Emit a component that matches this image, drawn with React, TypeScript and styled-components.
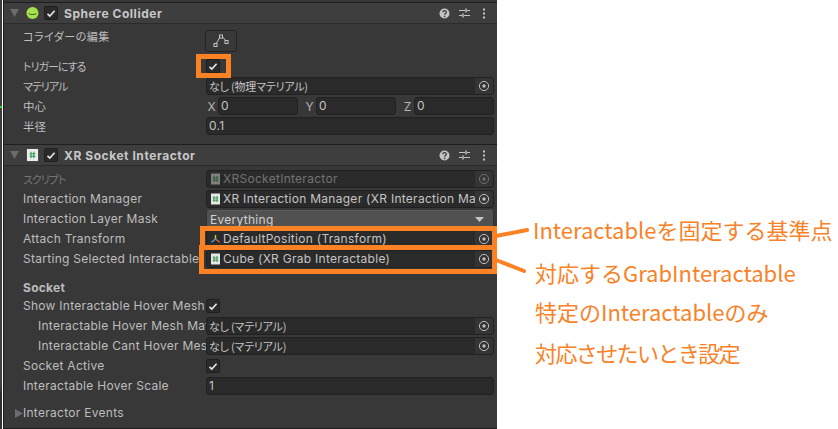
import React from "react";
import styled, { createGlobalStyle } from "styled-components";

const Global = createGlobalStyle`
  html, body { margin: 0; padding: 0; background: #fff; }
  body { font-family: Inter, "Noto Sans CJK JP", sans-serif; }
`;

const Page = styled.div`
  position: relative;
  display: flex;
  width: 838px;
  height: 429px;
  overflow: hidden;
  background: #fff;
`;

const SceneStrip = styled.div`
  position: relative;
  width: 2px;
  height: 429px;
  flex: none;
  background: linear-gradient(#3f3c38 0, #45423d 385px, #2c2c2c 395px, #333 429px);
`;

const GreenTick = styled.i`
  position: absolute;
  left: 0;
  top: 106px;
  width: 2px;
  height: 2px;
  background: #2fe02f;
`;

const Inspector = styled.div`
  width: 494px;
  height: 429px;
  flex: none;
  margin-left: 1px;
  background: #383838;
  border-left: 1px solid #1f1f1f;
  border-bottom: 1px solid #1f1f1f;
  box-sizing: border-box;
  overflow: hidden;
`;

const ComponentHeader = styled.div<{ $mt: number }>`
  display: flex;
  align-items: center;
  height: 20px;
  margin-top: ${(p) => p.$mt}px;
  padding: 0 8px 0 6px;
  background: #3e3e3e;
  border-top: 1px solid #1e1e1e;
  border-bottom: 1px solid #2b2b2b;
`;

const Fold = styled.svg`
  width: 9px;
  height: 8px;
  flex: none;
  margin-right: 7px;
`;

const HeaderIcon = styled.svg`
  width: 13px;
  height: 14px;
  flex: none;
  margin-right: 5px;
`;

const Toggle = styled.span`
  display: inline-flex;
  align-items: center;
  justify-content: center;
  width: 14px;
  height: 14px;
  flex: none;
  border-radius: 2px;
  border: 1px solid #1f1f1f;
  background: #2a2a2a;
  box-sizing: border-box;
`;

const Tick = () => (
  <svg width="10" height="9" viewBox="0 0 10 9">
    <path d="M1.5 4.8 L3.8 7 L8.6 1.8" fill="none" stroke="#e8e8e8" strokeWidth="1.6" />
  </svg>
);

const HeaderTitle = styled.span`
  margin-left: 6px;
  flex: 1;
  font-size: 12px;
  font-weight: 700;
  letter-spacing: 0.55px;
  color: #c8c8c8;
`;

const HeaderTools = styled.div`
  display: flex;
  align-items: center;
  gap: 9px;
`;

const Rows = styled.div<{ $pt?: number }>`
  padding: ${(p) => p.$pt ?? 0}px 3px 0 19px;
`;

const Row = styled.div<{ $h?: number; $dim?: boolean; $end?: boolean }>`
  position: relative;
  display: flex;
  align-items: ${(p) => (p.$end ? "flex-end" : "center")};
  height: ${(p) => p.$h ?? 20}px;
  color: ${(p) => (p.$dim ? "#767676" : "#bdbdbd")};
`;

const Label = styled.div<{ $indent?: boolean; $bold?: boolean }>`
  width: 183px;
  flex: none;
  box-sizing: border-box;
  padding-left: ${(p) => (p.$indent ? 15 : 0)}px;
  padding-right: 3px;
  font-size: 12px;
  letter-spacing: 0.28px;
  font-weight: ${(p) => (p.$bold ? 700 : 400)};
  white-space: nowrap;
  overflow: hidden;
  line-height: 16px;
`;

const JpLabel = styled(Label)<{ $top?: boolean; $size?: number; $ls?: number }>`
  font-size: ${(p) => p.$size ?? 11}px;
  letter-spacing: ${(p) => p.$ls ?? -1}px;
  font-family: "Noto Sans CJK JP", sans-serif;
  font-feature-settings: "palt";
  ${(p) => (p.$top ? "align-self: flex-start; margin-top: 4px;" : "")}
`;

const Value = styled.div`
  flex: 1;
  min-width: 0;
  display: flex;
  align-items: center;
`;

const Field = styled.div<{ $dim?: boolean }>`
  flex: 1;
  min-width: 0;
  height: 18px;
  display: flex;
  align-items: center;
  background: #2a2a2a;
  border: 1px solid #212121;
  border-radius: 3px;
  box-sizing: border-box;
  overflow: hidden;
  color: ${(p) => (p.$dim ? "#737373" : "#c4c4c4")};
`;

const FieldText = styled.span<{ $jp?: boolean }>`
  flex: 1;
  min-width: 0;
  padding-left: 2px;
  font-size: ${(p) => (p.$jp ? 11 : 12)}px;
  letter-spacing: ${(p) => (p.$jp ? -0.2 : 0.28)}px;
  font-family: ${(p) => (p.$jp ? '"Noto Sans CJK JP", sans-serif' : "Inter, sans-serif")};
  font-feature-settings: ${(p) => (p.$jp ? '"palt"' : "normal")};
  white-space: nowrap;
  overflow: hidden;
  line-height: 16px;
`;

const Picker = styled.span`
  width: 18px;
  height: 100%;
  flex: none;
  display: flex;
  align-items: center;
  justify-content: center;
  background: #343434;
`;

const PickIcon = ({ dim }: { dim?: boolean }) => (
  <svg width="12" height="12" viewBox="0 0 12 12">
    <circle cx="6" cy="6" r="4.6" fill="none" stroke={dim ? "#6e6e6e" : "#bdbdbd"} strokeWidth="1" />
    <circle cx="6" cy="6" r="1.7" fill={dim ? "#6e6e6e" : "#bdbdbd"} />
  </svg>
);

const FieldIcon = styled.svg<{ $dim?: boolean }>`
  flex: none;
  margin-left: 3px;
  opacity: ${(p) => (p.$dim ? 0.45 : 1)};
`;

const ScriptIcon = ({ dim }: { dim?: boolean }) => (
  <FieldIcon $dim={dim} width="11" height="12" viewBox="0 0 11 12">
    <rect x="1" y="0.5" width="9" height="11" fill="#e6e6e6" />
    <path d="M4 3v6M7 3v6M2.8 5h5.4M2.8 7.2h5.4" stroke="#3f9a56" strokeWidth="1.1" />
  </FieldIcon>
);

const TransformIcon = () => (
  <FieldIcon width="11" height="12" viewBox="0 0 12 12">
    <path d="M6 1.5V6" stroke="#a8d24f" strokeWidth="1.6" />
    <path d="M6 6 L10.5 9.5" stroke="#e0623f" strokeWidth="1.6" />
    <path d="M6 6 L1.5 9.5" stroke="#4a9fd8" strokeWidth="1.6" />
  </FieldIcon>
);

const EditButton = styled.div`
  width: 32px;
  height: 22px;
  margin: 2px 0 0 -1px;
  display: flex;
  align-items: center;
  justify-content: center;
  background: #383838;
  border: 1px solid #242424;
  border-radius: 3px;
  box-sizing: border-box;
`;

const Dropdown = styled.div`
  flex: 1;
  height: 18px;
  display: flex;
  align-items: center;
  justify-content: space-between;
  padding: 0 9px 0 3px;
  background: #515151;
  border: 1px solid #303030;
  border-top-color: #5c5c5c;
  border-radius: 3px;
  box-sizing: border-box;
  font-size: 12px;
  letter-spacing: 0.28px;
  color: #d2d2d2;
`;

const Vec = styled.div`
  flex: 1;
  display: flex;
  align-items: center;
  gap: 6px;
`;

const Axis = styled.span`
  font-size: 12px;
  color: #b4b4b4;
  width: 9px;
  margin-left: 1px;
  text-align: center;
`;

const VecItem = styled.div`
  flex: 1;
  display: flex;
  align-items: center;
  gap: 2px;
  min-width: 0;
`;

const SideFold = styled.svg`
  position: absolute;
  left: -8px;
  top: 13px;
  width: 8px;
  height: 9px;
`;

const Notes = styled.aside`
  flex: 1;
  display: flex;
  flex-direction: column;
  padding: 212px 0 0 36px;
  font-family: "Noto Sans CJK JP", sans-serif;
  font-size: 22px;
  color: #f98228;
  white-space: nowrap;
`;

const Note = styled.div<{ $h: number; $ml?: number; $ls?: number }>`
  height: ${(p) => p.$h}px;
  line-height: 34px;
  margin-left: ${(p) => p.$ml ?? 0}px;
  letter-spacing: ${(p) => p.$ls ?? 0}px;
`;

const Mark = styled.div<{ $x: number; $y: number; $w: number; $h: number }>`
  position: absolute;
  left: ${(p) => p.$x}px;
  top: ${(p) => p.$y}px;
  width: ${(p) => p.$w}px;
  height: ${(p) => p.$h}px;
  border: 5px solid #fb8125;
  box-sizing: border-box;
  pointer-events: none;
`;

const Callouts = styled.svg`
  position: absolute;
  left: 0;
  top: 0;
  pointer-events: none;
`;

const Check = () => (
  <Toggle>
    <Tick />
  </Toggle>
);

const Target = ({ text, jp, dim, icon }: { text: string; jp?: boolean; dim?: boolean; icon?: React.ReactNode }) => (
  <Value>
    <Field $dim={dim}>
      {icon}
      <FieldText $jp={jp}>{text}</FieldText>
      <Picker>
        <PickIcon dim={dim} />
      </Picker>
    </Field>
  </Value>
);

const Tools = () => (
  <HeaderTools>
    <svg width="11" height="11" viewBox="0 0 11 11">
      <circle cx="5.5" cy="5.5" r="5" fill="#c4c4c4" />
      <path d="M3.8 4.2c0-2.2 3.5-2.2 3.5 0 0 1.4-1.7 1.2-1.7 2.6" fill="none" stroke="#3e3e3e" strokeWidth="1.3" />
      <rect x="4.9" y="7.7" width="1.4" height="1.4" fill="#3e3e3e" />
    </svg>
    <svg width="11" height="10" viewBox="0 0 11 10">
      <path d="M0 2.5h6M8 2.5h3M0 7.5h3M5 7.5h6" stroke="#c4c4c4" strokeWidth="1.2" />
      <path d="M7 0.5v4M4 5.5v4" stroke="#c4c4c4" strokeWidth="1.4" />
    </svg>
    <svg width="10" height="11" viewBox="0 0 10 11">
      <path d="M5 0.5v2M5 4.5v2M5 8.5v2" stroke="#c4c4c4" strokeWidth="2" />
    </svg>
  </HeaderTools>
);

const FoldDown = () => (
  <Fold viewBox="0 0 9 8">
    <path d="M0 0H9L4.5 8Z" fill="#6c6c6c" />
  </Fold>
);

export default function App() {
  return (
    <Page>
      <Global />
      <SceneStrip>
        <GreenTick />
      </SceneStrip>
      <Inspector>
        <ComponentHeader $mt={2}>
          <FoldDown />
          <HeaderIcon viewBox="0 0 14 14">
            <circle cx="7" cy="7" r="6.5" fill="#a4e24c" />
            <path d="M3 7c1.8 1.6 6.2 1.6 8 0v1.2c-1.8 1.4-6.2 1.4-8 0Z" fill="#4a5f2c" />
          </HeaderIcon>
          <Check />
          <HeaderTitle>Sphere Collider</HeaderTitle>
          <Tools />
        </ComponentHeader>
        <Rows>
          <Row $h={32}>
            <JpLabel $top $ls={0.5}>コライダーの編集</JpLabel>
            <EditButton>
              <svg width="16" height="14" viewBox="0 0 16 14">
                <path d="M3 10 L7 3 M9.5 3 L13 7" stroke="#c4c4c4" strokeWidth="1" />
                <rect x="1" y="9.5" width="3" height="3" fill="none" stroke="#c4c4c4" />
                <rect x="6.5" y="1" width="3" height="3" fill="none" stroke="#c4c4c4" />
                <rect x="12" y="6.5" width="3" height="3" fill="none" stroke="#c4c4c4" />
              </svg>
            </EditButton>
          </Row>
          <Row>
            <JpLabel>トリガーにする</JpLabel>
            <Check />
          </Row>
          <Row>
            <JpLabel>マテリアル</JpLabel>
            <Target text="なし (物理マテリアル)" jp />
          </Row>
          <Row>
            <JpLabel $size={11.5} $ls={0}>中心</JpLabel>
            <Vec>
              {["X", "Y", "Z"].map((a) => (
                <VecItem key={a}>
                  <Axis>{a}</Axis>
                  <Field>
                    <FieldText>0</FieldText>
                  </Field>
                </VecItem>
              ))}
            </Vec>
          </Row>
          <Row>
            <JpLabel $size={11.5} $ls={0}>半径</JpLabel>
            <Value>
              <Field>
                <FieldText>0.1</FieldText>
              </Field>
            </Value>
          </Row>
        </Rows>
        <ComponentHeader $mt={8}>
          <FoldDown />
          <HeaderIcon viewBox="0 0 14 14">
            <path d="M1 0.5H13V13.5H1Z" fill="#ececec" />
            <path d="M5.4 3.5v7M8.4 3.5v7M3.8 5.7h6.4M3.8 8.3h6.4" stroke="#2f9a50" strokeWidth="1.2" />
          </HeaderIcon>
          <Check />
          <HeaderTitle>XR Socket Interactor</HeaderTitle>
          <Tools />
        </ComponentHeader>
        <Rows $pt={2}>
          <Row $dim $h={21}>
            <JpLabel>スクリプト</JpLabel>
            <Target text="XRSocketInteractor" dim icon={<ScriptIcon dim />} />
          </Row>
          <Row>
            <Label>Interaction Manager</Label>
            <Target text="XR Interaction Manager (XR Interaction Manager)" icon={<ScriptIcon />} />
          </Row>
          <Row>
            <Label>Interaction Layer Mask</Label>
            <Dropdown>
              Everything
              <svg width="9" height="5" viewBox="0 0 9 5">
                <path d="M0 0H9L4.5 5Z" fill="#c4c4c4" />
              </svg>
            </Dropdown>
          </Row>
          <Row>
            <Label>Attach Transform</Label>
            <Target text="DefaultPosition (Transform)" icon={<TransformIcon />} />
          </Row>
          <Row>
            <Label>Starting Selected Interactable</Label>
            <Target text="Cube (XR Grab Interactable)" icon={<ScriptIcon />} />
          </Row>
          <Row $h={27} $end>
            <Label $bold>Socket</Label>
          </Row>
          <Row>
            <Label>Show Interactable Hover Mesh</Label>
            <Check />
          </Row>
          <Row>
            <Label $indent>Interactable Hover Mesh Material</Label>
            <Target text="なし (マテリアル)" jp />
          </Row>
          <Row>
            <Label $indent>Interactable Cant Hover Mesh Material</Label>
            <Target text="なし (マテリアル)" jp />
          </Row>
          <Row>
            <Label>Socket Active</Label>
            <Check />
          </Row>
          <Row>
            <Label>Interactable Hover Scale</Label>
            <Value>
              <Field>
                <FieldText>1</FieldText>
              </Field>
            </Value>
          </Row>
          <Row $h={34}>
            <Label>Interactor Events</Label>
            <SideFold viewBox="0 0 8 9">
              <path d="M0 0V9L8 4.5Z" fill="#6c6c6c" />
            </SideFold>
          </Row>
        </Rows>
      </Inspector>
      <Notes>
        <Note $h={43}>Interactableを固定する基準点</Note>
        <Note $h={39} $ml={2}>対応するGrabInteractable</Note>
        <Note $h={41} $ml={2}>特定のInteractableのみ</Note>
        <Note $h={34} $ml={2} $ls={-1.6}>対応させたいとき設定</Note>
      </Notes>
      <Mark $x={196} $y={54} $w={35} $h={24} />
      <Mark $x={200} $y={226} $w={297} $h={24} />
      <Mark $x={199} $y={245} $w={298} $h={29} />
      <Callouts width="838" height="429" viewBox="0 0 838 429">
        <path d="M496 236 L527 230" stroke="#fb8125" strokeWidth="4" strokeLinecap="round" fill="none" />
        <path d="M496 260 L524 271" stroke="#fb8125" strokeWidth="4" strokeLinecap="round" fill="none" />
      </Callouts>
    </Page>
  );
}
